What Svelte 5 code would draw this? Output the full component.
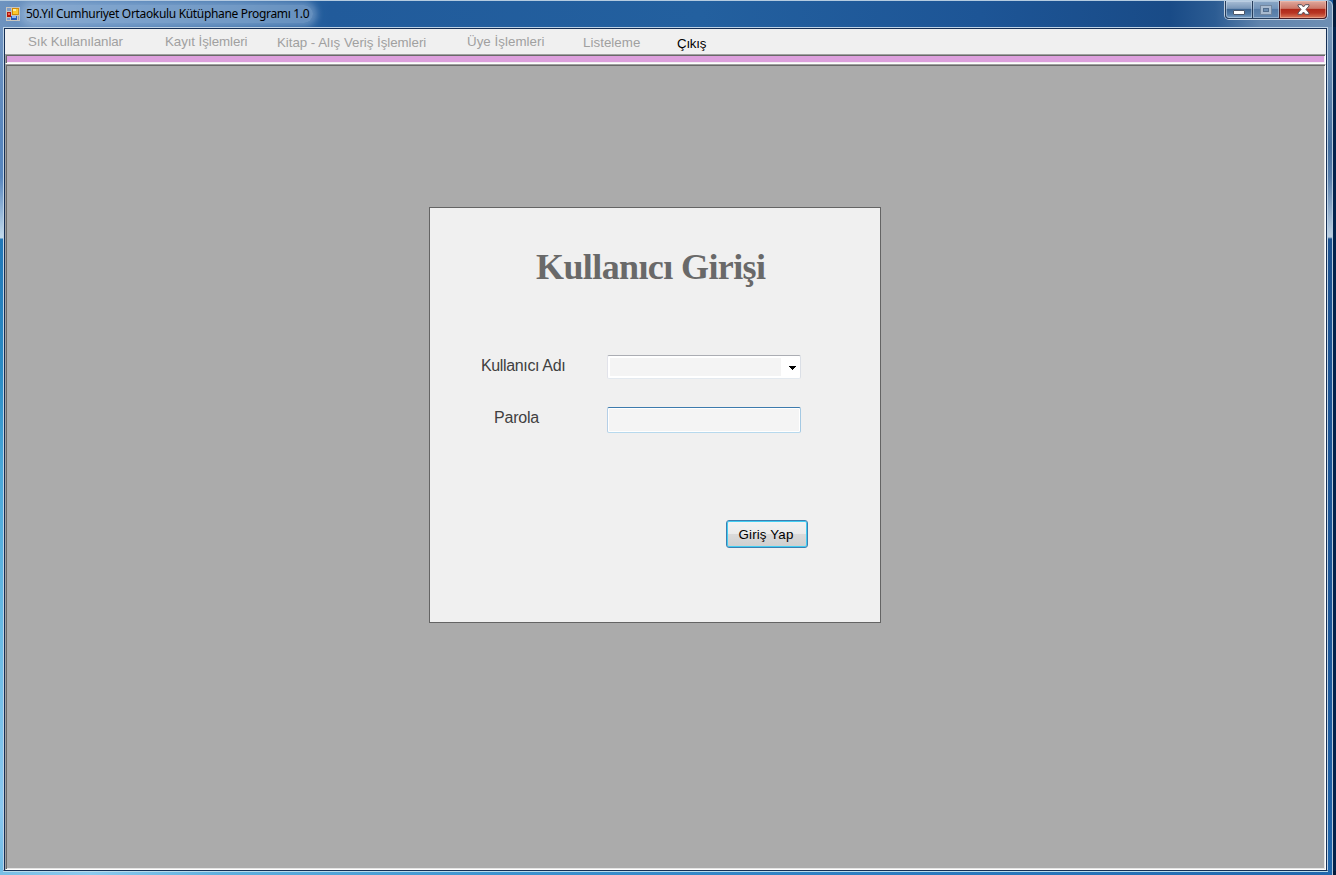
<script>
  const menu = [
    { label: 'Sık Kullanılanlar', cls: 'm1' },
    { label: 'Kayıt İşlemleri', cls: 'm2' },
    { label: 'Kitap - Alış Veriş İşlemleri', cls: 'm3' },
    { label: 'Üye İşlemleri', cls: 'm4' },
    { label: 'Listeleme', cls: 'm5' },
    { label: 'Çıkış', cls: 'm6' }
  ];
</script>

<div class="window">
  <header>
    <svg class="app-icon" width="14" height="14" viewBox="0 0 14 14" shape-rendering="crispEdges">
      <rect width="14" height="14" fill="#c9c5bd" />
      <rect x="1" y="1" width="4" height="3" fill="#7f9bc4" />
      <rect x="1" y="5" width="4" height="5" fill="#b5150c" />
      <rect x="2" y="6" width="2" height="2" fill="#ef6a55" />
      <rect x="6" y="1" width="7" height="7" fill="#d48a00" />
      <rect x="7" y="2" width="5" height="5" fill="#ffc928" />
      <rect x="7" y="2" width="3" height="2" fill="#fff0a0" />
      <rect x="1" y="11" width="3" height="2" fill="#7b9bd0" />
      <rect x="5" y="9" width="6" height="4" fill="#2458bb" />
      <rect x="6" y="9" width="4" height="2" fill="#8db8f5" />
      <rect x="12" y="9" width="1" height="4" fill="#8499bd" />
    </svg>
    <h1>50.Yıl Cumhuriyet Ortaokulu Kütüphane Programı 1.0</h1>
    <div class="controls">
      <button class="min" aria-label="Simge durumuna küçült">
        <svg width="12" height="5"><rect x=".5" y=".5" width="11" height="4" rx=".5" fill="#fff" stroke="#4c5668" /></svg>
      </button>
      <button class="max" aria-label="Ekranı kapla">
        <svg width="12" height="10" shape-rendering="crispEdges">
          <rect x=".5" y=".5" width="11" height="9" fill="#a9bbd0" stroke="#71869f" />
          <rect x="3.5" y="3.5" width="5" height="3" fill="#6c8db2" stroke="#526d8d" />
        </svg>
      </button>
      <button class="close" aria-label="Kapat">
        <svg width="13" height="11" viewBox="0 0 13 11">
          <path d="M1 .7H4.6L6.5 3 8.4.7H12V2L9 5.4 12 9v1.3H8.4L6.5 8 4.6 10.3H1V9L4 5.4 1 2Z" fill="#fff" stroke="#56505b" />
        </svg>
      </button>
    </div>
  </header>

  <div class="body">
    <div class="frame-left"></div>
    <main>
      <nav>
        {#each menu as item}
          <span class={item.cls}>{item.label}</span>
        {/each}
      </nav>
      <div class="strip"></div>
      <section class="workspace">
        <form class="login" onsubmit={(e) => e.preventDefault()}>
          <h2>Kullanıcı Girişi</h2>
          <div class="row user">
            <label for="user"><span>Kullanıcı Adı</span></label>
            <button type="button" id="user" class="combo" aria-label="Kullanıcı Adı">
              <span class="value"></span>
              <svg width="7" height="4" shape-rendering="crispEdges"><path d="M0 0H7V1H6V2H5V3H4V4H3V3H2V2H1V1H0Z" fill="#000" /></svg>
            </button>
          </div>
          <div class="row pass">
            <label for="pass"><span>Parola</span></label>
            <input id="pass" type="password" />
          </div>
          <button class="submit"><span>Giriş Yap</span></button>
        </form>
      </section>
    </main>
    <div class="frame-right"></div>
  </div>
  <footer></footer>
</div>

<style>
  :global(body) { background: #021b3d; overflow: hidden; }
  * { box-sizing: border-box; }
  .window {
    width: 1336px; height: 875px; display: flex; flex-direction: column;
    font-family: "Liberation Sans", Arial, sans-serif;
    background: linear-gradient(90deg, #74bfe8 0, #5fb0de 120px, #2e78b8 500px, #1f5fa4 900px, #1c5b9e 1333px, #021b3d 1333px);
  }
  header {
    height: 27px; flex: none; display: flex; align-items: flex-start; padding-left: 6px;
    border-top: 1px solid #b4cbe0; width: 1333px; border-right: 1px solid #b8cbdd;
    border-radius: 0 6px 0 0;
    background: linear-gradient(90deg, #6e93bf 0, #5483b8 100px, #3b70aa 240px, #215b9b 330px, #23609f 700px, #1d5596 980px, #194b87 1170px, #2c5c93 1215px, #6084ad 1260px, #6e8fb4 1333px);
  }
  .app-icon { margin-top: 6px; flex: none; }
  h1 {
    margin: 4px 0 0 4px; padding: 0 2px; width: 289px; height: 18px;
    font: 400 12px/18px "Noto Sans", "Open Sans", sans-serif; letter-spacing: -.33px;
    color: #000; white-space: nowrap; border-radius: 9px;
    background: rgba(180,204,230,.45); box-shadow: 0 0 7px 4px rgba(180,204,230,.42);
  }
  .controls {
    margin-left: auto; margin-right: 4px; display: flex; width: 104px; height: 19px;
    border: 1px solid #c0cfdf; border-top: 0; border-radius: 0 0 5px 5px;
  }
  .controls button {
    flex: none; border: 1px solid #263d5b; border-top: 0; margin: 0; padding: 0; height: 18px;
    display: flex; justify-content: center; align-items: center;
    background: linear-gradient(#a9bfd6 0, #7896b8 44%, #38618f 45%, #547da9 80%, #82a5c8 100%);
    box-shadow: inset 0 0 0 1px rgba(205,222,238,.5);
  }
  .controls svg { flex: none; display: block; }
  .controls .min { width: 28px; border-radius: 0 0 0 4px; padding-top: 5px; }
  .controls .max { width: 28px; margin-left: -1px; background: linear-gradient(#8ba7c5 0, #7395bb 44%, #5379a5 45%, #6388b1 100%); }
  .controls .close {
    width: 48px; margin-left: -1px; border-color: #481c25; border-radius: 0 0 4px 0;
    background: linear-gradient(#dfa99d 0, #cc7768 44%, #ad2718 45%, #b73422 70%, #d9795a 100%);
    box-shadow: inset 0 0 0 1px rgba(248,196,180,.5);
  }
  .body { display: flex; height: 844px; flex: none; }
  .frame-left {
    width: 3px; flex: none;
    background: linear-gradient(#7094c0 0, #5886bd 110px, #5886bd 150px, #bfd8eb 209px, #bfd8eb 211px, #2278b7 212px, #2b8cc4 345px, #49a7d8 440px, #6abbe4 610px, #8bc8ef 780px, #70bbe4 845px);
  }
  .frame-right {
    width: 8px; flex: none; border-right: 3px solid #02224c;
    background:
      linear-gradient(#b3c8dc, #b3c8dc) 4px 0 / 1px 100% no-repeat,
      linear-gradient(#7797ba 0, #446f9f 120px, #587fac 150px, #b9cde0 208px, #b9cde0 210px, #1d5290 212px, #1c5798 600px, #2067ad 845px);
  }
  main {
    width: 1325px; height: 844px; flex: none; display: flex; flex-direction: column;
    border: 1px solid; border-color: #bfd3e6 #bfd3e6 #142f54 #bfd3e6;
    box-shadow: inset 1px 1px #152f55, inset -1px 0 #152f55, 0 1px #b9dbea;
    padding: 1px 1px 0; position: relative;
  }
  nav {
    height: 25px; flex: none; display: flex; align-items: flex-start; padding-left: 23px;
    background: #f0f0f0; color: #a0a0a0; font-size: 13.33px; line-height: 16px; white-space: nowrap;
    letter-spacing: -.08px;
  }
  .m1 { width: 137px; padding-top: 5px; }
  .m2 { width: 112px; padding-top: 5px; }
  .m3 { width: 190px; padding-top: 6px; letter-spacing: -.04px; }
  .m4 { width: 116px; padding-top: 5px; letter-spacing: .04px; }
  .m5 { width: 94px; padding-top: 6px; letter-spacing: .04px; }
  .m6 { padding-top: 7px; color: #000; letter-spacing: -.25px; }
  .strip {
    height: 10px; flex: none; background: #dda0dd; border: 1px solid;
    border-color: #a0a0a0 #fff #fff #a0a0a0; box-shadow: inset 1px 1px #696969, inset -1px -1px #f4eff4;
  }
  .workspace {
    flex: 1; background: #ababab; border: 1px solid; border-color: #a0a0a0 #fff #fff #a0a0a0;
    box-shadow: inset 1px 1px #696969, inset -1px -1px #e3e3e3;
    padding: 142px 0 0 423px;
  }
  .login {
    width: 452px; height: 416px; background: #f0f0f0; border: 1px solid #646464;
    display: flex; flex-direction: column;
  }
  h2 {
    margin: 38px 0 0 106px; height: 42px; white-space: nowrap; color: #696969;
    font: 700 36px/42px "Liberation Serif", "Times New Roman", serif; letter-spacing: -.6px;
  }
  .row { display: flex; align-items: flex-start; }
  .user { margin-top: 67px; height: 24px; }
  .pass { margin-top: 28px; height: 26px; }
  label { width: 177px; flex: none; font-size: 16px; line-height: 18px; color: #404040; white-space: nowrap; }
  .user label { padding-left: 51px; padding-top: 2px; letter-spacing: -.36px; }
  .pass label { padding-left: 64px; padding-top: 2px; letter-spacing: -.2px; }
  .combo {
    width: 194px; height: 24px; padding: 0 5px 0 2px; margin: 0; display: flex; align-items: center; justify-content: space-between;
    background: #fff; border: 1px solid; border-color: #abadb3 #dbdfe6 #e3e9ef #e2e3ea; border-radius: 2px;
  }
  .value { width: 171px; height: 18px; background: #f4f4f4; }
  .combo svg { margin: 2px -1px 0 0; }
  input {
    width: 194px; height: 26px; margin: 0; padding: 0 4px; outline: 0; background: #f4f4f4;
    border: 1px solid; border-color: #3d7bad #a4c9e3 #b7d9ed #b5cfe7; border-radius: 2px;
    box-shadow: inset 0 0 0 1px #fff;
  }
  .submit {
    margin: 87px 0 0 296px; padding: 2px 2px 0 0; width: 82px; height: 28px; border: 1px solid #3c7fb1; border-radius: 3px;
    font: 13.33px/16px "Liberation Sans", Arial, sans-serif; letter-spacing: .15px; color: #000;
    background: linear-gradient(#f2f2f2 0, #ebebeb 48%, #dadada 50%, #cfcfcf 100%);
    box-shadow: inset 0 0 0 1px #42cdf2;
  }
  footer {
    height: 4px; flex: none; width: 1333px; border-right: 1px solid #b3c8dc;
    background: linear-gradient(90deg, #78bfe5 0, #8bcaee 90px, #5fb0de 220px, #3c93cf 500px, #2b7cc0 900px, #2067ad 1333px);
  }
</style>
